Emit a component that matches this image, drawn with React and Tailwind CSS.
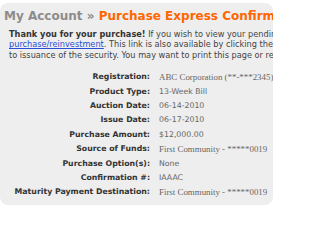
export default function App() {
  const rows = [
    ["Registration:", "ABC Corporation (**-***2345)", true],
    ["Product Type:", "13-Week Bill", false],
    ["Auction Date:", "06-14-2010", false],
    ["Issue Date:", "06-17-2010", false],
    ["Purchase Amount:", "$12,000.00", false],
    ["Source of Funds:", "First Community - *****0019", true],
    ["Purchase Option(s):", "None", false],
    ["Confirmation #:", "IAAAC", false],
    ["Maturity Payment Destination:", "First Community - *****0019", true],
  ];

  return (
    <div className="w-[276px] h-[212px] bg-white overflow-hidden font-['DejaVu_Sans',Verdana,sans-serif]">
      <div className="mt-[3px] w-[273px] h-[202px] bg-[#eeeeee] rounded-[8px] overflow-hidden">
        {/* Title */}
        <div className="pl-[4px] pt-[5px] h-[22px] text-[12px] leading-[16px] font-bold whitespace-nowrap">
          <span className="text-[#8c8c8c]">My Account » </span>
          <span className="text-[#ff6600]">Purchase Express Confirmation</span>
        </div>

        {/* Intro */}
        <div className="pl-[9px] pt-[4px] text-[8.2px] leading-[10.4px] text-[#444] whitespace-nowrap">
          <div>
            <span className="font-bold text-[#333]">Thank you for your purchase!</span> If you wish to view your pending purchases
          </div>
          <div>
            <span className="text-[#2a4fd6] underline">purchase/reinvestment</span>. This link is also available by clicking the link
          </div>
          <div>to issuance of the security. You may want to print this page or record</div>
        </div>

        {/* Details */}
        <div className="mt-[10px] grid grid-cols-[150px_auto] gap-x-[9px] whitespace-nowrap">
          {rows.map(([label, value, serif]) => (
            <div key={label} className="contents">
              <div className="h-[14.4px] leading-[14.4px] text-right text-[7.8px] font-bold text-[#333]">{label}</div>
              <div
                className={
                  serif
                    ? "h-[14.4px] leading-[14.4px] text-[8.9px] text-[#666] font-['Liberation_Serif',serif]"
                    : "h-[14.4px] leading-[14.4px] text-[7.8px] text-[#666]"
                }
              >
                {value}
              </div>
            </div>
          ))}
        </div>
      </div>
    </div>
  );
}
